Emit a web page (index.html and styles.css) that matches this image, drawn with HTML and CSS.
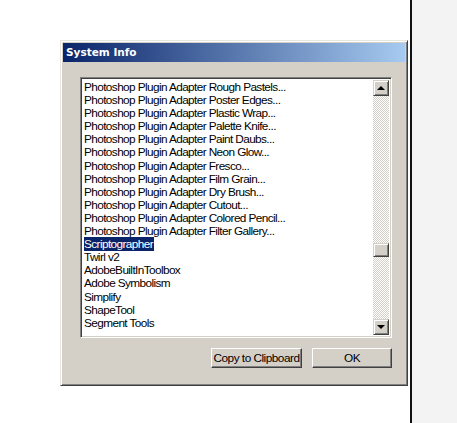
FILE: index.html
```html
<!DOCTYPE html>
<html lang="en">
<head>
    <meta charset="UTF-8">
    <title>System Info</title>
    <link rel="stylesheet" href="styles.css">
</head>
<body>
    <div class="page">
        <div class="canvas">
            <div class="window">
                <div class="title-bar">System Info</div>
                <div class="body">
                    <div class="listbox">
                        <div class="items">
                            <div class="item">Photoshop Plugin Adapter Rough Pastels...</div>
                            <div class="item">Photoshop Plugin Adapter Poster Edges...</div>
                            <div class="item">Photoshop Plugin Adapter Plastic Wrap...</div>
                            <div class="item">Photoshop Plugin Adapter Palette Knife...</div>
                            <div class="item">Photoshop Plugin Adapter Paint Daubs...</div>
                            <div class="item">Photoshop Plugin Adapter Neon Glow...</div>
                            <div class="item">Photoshop Plugin Adapter Fresco...</div>
                            <div class="item">Photoshop Plugin Adapter Film Grain...</div>
                            <div class="item">Photoshop Plugin Adapter Dry Brush...</div>
                            <div class="item">Photoshop Plugin Adapter Cutout...</div>
                            <div class="item">Photoshop Plugin Adapter Colored Pencil...</div>
                            <div class="item">Photoshop Plugin Adapter Filter Gallery...</div>
                            <div class="item"><span class="selected">Scriptographer</span></div>
                            <div class="item">Twirl v2</div>
                            <div class="item">AdobeBuiltInToolbox</div>
                            <div class="item">Adobe Symbolism</div>
                            <div class="item">Simplify</div>
                            <div class="item">ShapeTool</div>
                            <div class="item">Segment Tools</div>
                        </div>
                        <div class="scrollbar">
                            <div class="arrow"><span class="tri up"></span></div>
                            <div class="track">
                                <div class="track-fill top"></div>
                                <div class="thumb"></div>
                                <div class="track-fill"></div>
                            </div>
                            <div class="arrow"><span class="tri down"></span></div>
                        </div>
                    </div>
                    <div class="buttons">
                        <button class="btn copy">Copy to Clipboard</button>
                        <button class="btn ok">OK</button>
                    </div>
                </div>
            </div>
        </div>
        <div class="divider"></div>
        <div class="side"></div>
    </div>
</body>
</html>
```

FILE: styles.css
```css
body {
    margin: 0;
    padding: 0;
    background: #fff;
    font-family: "Liberation Sans", Arial, sans-serif;
}

.page {
    display: flex;
    height: 423px;
}

.canvas {
    width: 410px;
    padding: 40px 0 0 60px;
    box-sizing: border-box;
    background: #fff;
}

.divider {
    width: 2px;
    background: #111;
}

.side {
    flex: 1;
    background: #f3f3f3;
}

.window {
    width: 348px;
    height: 346px;
    box-sizing: border-box;
    background: #d4d0c8;
    border: 1px solid;
    border-color: #e8e6e2 #404040 #404040 #e8e6e2;
    box-shadow: inset 1px 1px 0 #fff, inset -1px -1px 0 #808080;
    padding: 2px;
    display: flex;
    flex-direction: column;
}

.title-bar {
    height: 19px;
    line-height: 19px;
    padding-left: 3px;
    color: #fff;
    font-family: "DejaVu Sans", Tahoma, sans-serif;
    font-weight: bold;
    font-size: 10.5px;
    background: linear-gradient(to right, #0a246a, #a6caf0);
}

.body {
    padding: 15px 13px 0 17px;
}

.listbox {
    display: flex;
    height: 261px;
    box-sizing: border-box;
    border: 1px solid;
    border-color: #808080 #fff #fff #808080;
    box-shadow: inset 1px 1px 0 #404040, inset -1px -1px 0 #d4d0c8;
    padding: 2px;
    background: #fff;
}

.items {
    flex: 1;
    padding: 1px 0 0 1px;
    overflow: hidden;
}

.item {
    height: 13.1px;
    line-height: 13px;
    font-size: 11.8px;
    letter-spacing: -0.6px;
    color: #000;
    white-space: nowrap;
}

.selected {
    background: #0a246a;
    color: #fff;
    padding-right: 1px;
}

.scrollbar {
    width: 16px;
    display: flex;
    flex-direction: column;
}

.arrow,
.thumb {
    height: 16px;
    box-sizing: border-box;
    background: #d4d0c8;
    border: 1px solid;
    border-color: #d4d0c8 #404040 #404040 #d4d0c8;
    box-shadow: inset 1px 1px 0 #fff, inset -1px -1px 0 #808080;
    display: flex;
    align-items: center;
    justify-content: center;
}

.thumb {
    height: 14px;
}

.tri {
    width: 0;
    height: 0;
    border-left: 4px solid transparent;
    border-right: 4px solid transparent;
}

.tri.up {
    border-bottom: 4px solid #000;
}

.tri.down {
    border-top: 4px solid #000;
}

.track {
    flex: 1;
    display: flex;
    flex-direction: column;
}

.track-fill {
    flex: 1;
    background-color: #fff;
    background-image: conic-gradient(#d4d0c8 25%, #fff 0 50%, #d4d0c8 0 75%, #fff 0);
    background-size: 2px 2px;
}

.track-fill.top {
    flex: 0 0 147px;
}

.buttons {
    display: flex;
    justify-content: flex-end;
    gap: 10px;
    padding-top: 10px;
}

.btn {
    height: 20px;
    padding: 0;
    background: #d4d0c8;
    border: 1px solid;
    border-color: #fff #404040 #404040 #fff;
    box-shadow: inset -1px -1px 0 #808080;
    font-family: "Liberation Sans", Arial, sans-serif;
    font-size: 11.8px;
    letter-spacing: -0.5px;
    white-space: nowrap;
    color: #000;
}

.btn.copy {
    width: 91px;
}

.btn.ok {
    width: 80px;
}
```
